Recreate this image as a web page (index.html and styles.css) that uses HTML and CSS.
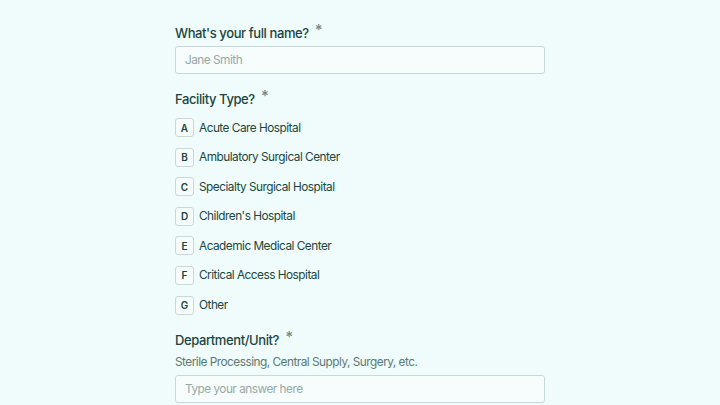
FILE: index.html
```html
<html>
    <head>
        <link rel="stylesheet" href="styles.css">
    </head>
    <body>
        <div class="form">
            <div class="question">
                <label class="label">What's your full name? <span class="req">*</span></label>
                <input class="answer" type="text" placeholder="Jane Smith">
            </div>

            <div class="question">
                <label class="label">Facility Type? <span class="req">*</span></label>
                <div class="choices">
                    <div class="choice"><span class="key">A</span>Acute Care Hospital</div>
                    <div class="choice"><span class="key">B</span>Ambulatory Surgical Center</div>
                    <div class="choice"><span class="key">C</span>Specialty Surgical Hospital</div>
                    <div class="choice"><span class="key">D</span>Children's Hospital</div>
                    <div class="choice"><span class="key">E</span>Academic Medical Center</div>
                    <div class="choice"><span class="key">F</span>Critical Access Hospital</div>
                    <div class="choice"><span class="key">G</span>Other</div>
                </div>
            </div>

            <div class="question">
                <label class="label">Department/Unit? <span class="req">*</span></label>
                <div class="hint">Sterile Processing, Central Supply, Surgery, etc.</div>
                <input class="answer" type="text" placeholder="Type your answer here">
            </div>
        </div>
    </body>
</html>
```

FILE: styles.css
```css
body {
    margin: 0;
    background-color: #f0fcfb;
    font-family: Inter, "Noto Sans", sans-serif;
    color: #1a4540;
    letter-spacing: -0.5px;
}

.form {
    width: 370px;
    margin: 0 auto;
    padding-top: 23px;
}

.question {
    display: flex;
    flex-direction: column;
    margin-bottom: 15px;
}

.label {
    font-size: 13px;
    line-height: 20px;
    font-weight: 500;
    letter-spacing: -0.4px;
    margin-bottom: 3px;
}

.req {
    color: #6f8d89;
    font-size: 15px;
    line-height: 10px;
    position: relative;
    top: -3px;
    margin-left: 3px;
}

.hint {
    font-size: 11.8px;
    line-height: 18px;
    color: #5b7874;
    margin-bottom: 4px;
}

.answer {
    box-sizing: border-box;
    height: 28px;
    width: 100%;
    padding: 0 9px;
    border: 1px solid #c7d9d6;
    border-radius: 3px;
    background-color: #f6fdfc;
    font-family: inherit;
    font-size: 11.8px;
    letter-spacing: -0.5px;
    color: #1a4540;
    outline: none;
}

.answer::placeholder {
    color: #94aaa7;
}

.choices {
    display: flex;
    flex-direction: column;
    gap: 10.6px;
    margin-top: 6px;
}

.choice {
    display: flex;
    align-items: center;
    height: 19px;
    font-size: 11.8px;
    color: #1c4540;
}

.key {
    box-sizing: border-box;
    width: 19px;
    height: 19px;
    display: flex;
    align-items: center;
    justify-content: center;
    border: 1px solid #c7d9d6;
    border-radius: 3px;
    background-color: #f6fdfc;
    font-size: 10px;
    font-weight: 600;
    letter-spacing: 0;
    margin-right: 5px;
}
```
